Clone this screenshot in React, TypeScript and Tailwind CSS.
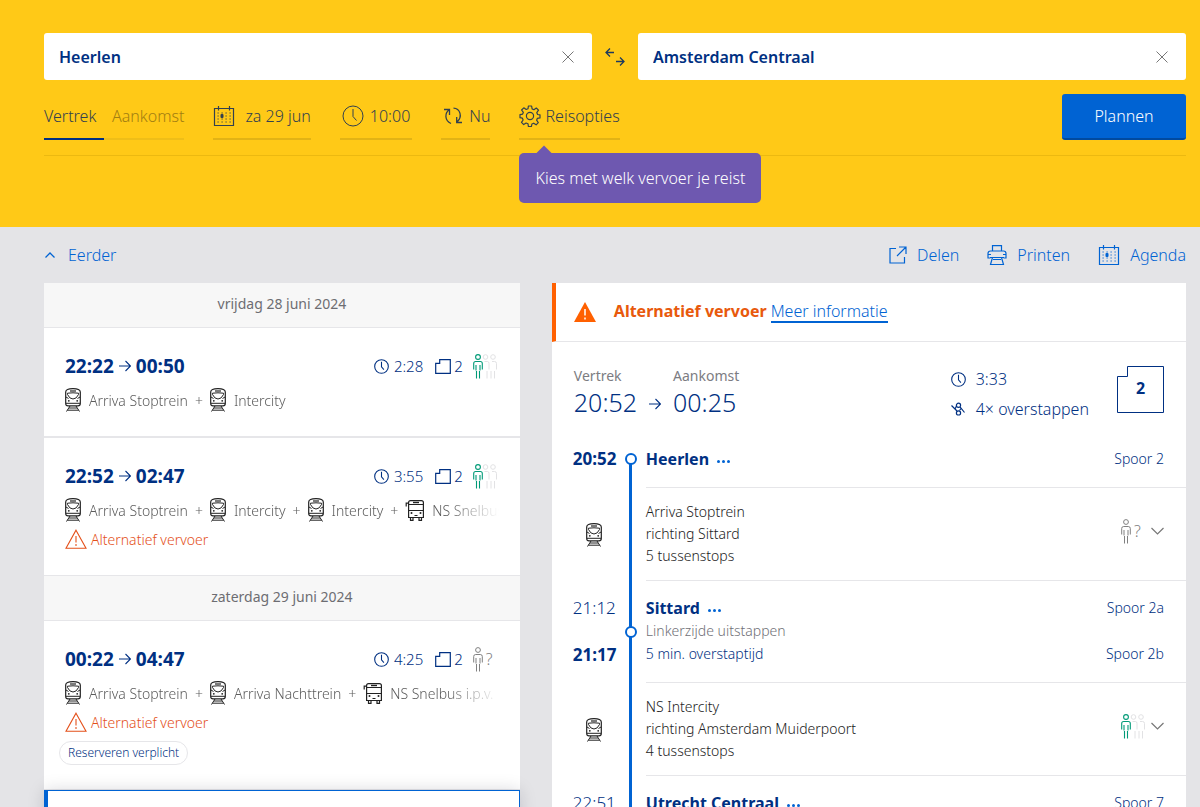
import { Fragment } from 'react';
import clsx from 'clsx';

type Crowd = 'low' | 'unknown';

interface TripLeg {
  kind: 'train' | 'bus';
  name: string;
}

interface Trip {
  departure: string;
  arrival: string;
  duration: string;
  crowd: Crowd;
  legs: TripLeg[];
  disrupted?: boolean;
  label?: string;
}

const fridayTrips: Trip[] = [
  {
    departure: '22:22',
    arrival: '00:50',
    duration: '2:28',
    crowd: 'low',
    legs: [
      { kind: 'train', name: 'Arriva Stoptrein' },
      { kind: 'train', name: 'Intercity' },
    ],
  },
  {
    departure: '22:52',
    arrival: '02:47',
    duration: '3:55',
    crowd: 'low',
    disrupted: true,
    legs: [
      { kind: 'train', name: 'Arriva Stoptrein' },
      { kind: 'train', name: 'Intercity' },
      { kind: 'train', name: 'Intercity' },
      { kind: 'bus', name: 'NS Snelbus' },
    ],
  },
];

const saturdayTrips: Trip[] = [
  {
    departure: '00:22',
    arrival: '04:47',
    duration: '4:25',
    crowd: 'unknown',
    disrupted: true,
    label: 'Reserveren verplicht',
    legs: [
      { kind: 'train', name: 'Arriva Stoptrein' },
      { kind: 'train', name: 'Arriva Nachttrein' },
      { kind: 'bus', name: 'NS Snelbus i.p.v.' },
    ],
  },
];

/* Icons */

function ClockIcon({ className }: { className?: string }) {
  return (
    <svg viewBox="0 0 22 22" fill="none" stroke="currentColor" className={className} aria-hidden="true">
      <circle cx="11" cy="11" r="10" />
      <path d="M11 4v7.5l3.5 4" />
    </svg>
  );
}

function CalendarIcon() {
  return (
    <svg width="22" height="22" viewBox="0 0 22 22" fill="none" stroke="currentColor" aria-hidden="true">
      <path d="M1.5 3.5h19v17h-19zM5.500 1v4.500M16.500 1v4.500" strokeWidth="1.200" />
      <path d="M4.500 8h14M4.500 11h14M4.500 14h14M4.500 17h14" strokeWidth="1.200" strokeDasharray="1.200 2.800" />
      <rect x="7.500" y="9" width="3" height="4" rx="1" fill="currentColor" stroke="none" />
    </svg>
  );
}

function RefreshIcon() {
  return (
    <svg width="20" height="20" viewBox="0 0 20 20" fill="none" stroke="currentColor" strokeWidth="1.300" aria-hidden="true">
      <path d="M1 3.500h5.500V9M6.300 3.800C1.500 7 1.500 14.500 8 17.500M10.500 2.200c6.500.3 9.500 8.300 3.500 13.800M19 16.500h-5.300V11" />
    </svg>
  );
}

function GearIcon() {
  return (
    <svg width="22" height="22" viewBox="0 0 22 22" fill="none" stroke="currentColor" strokeWidth="1.200" strokeLinejoin="round" aria-hidden="true">
      <circle cx="11" cy="11" r="3.600" />
      <path d="M9.400 1h3.200l.5 2.900 1.800.8 2.400-1.700 2.200 2.200-1.700 2.500.8 1.800 2.400.3v3.100l-2.600.4-.8 1.900 1.700 2.400-2.200 2.200-2.400-1.600-1.800.8-.5 2.500H9.400L9 18.800l-1.900-.8-2.400 1.600-2.200-2.200 1.600-2.400-.8-1.900L1 12.700V9.600l2.500-.4.8-1.800-1.700-2.400 2.200-2.200 2.400 1.700L9 3.800z" />
    </svg>
  );
}

function SwapIcon() {
  return (
    <svg width="20" height="18" viewBox="0 0 20 18" fill="none" stroke="currentColor" strokeWidth="1.300" aria-hidden="true">
      <path d="M9 4.500H1M5 .5l-4 4 4 4M11 13.500h8M15 9.500l4 4-4 4" />
    </svg>
  );
}

function CrossIcon() {
  return (
    <svg width="12" height="12" viewBox="0 0 12 12" fill="none" stroke="currentColor" aria-hidden="true">
      <path d="M.5.5l11 11M11.500.5l-11 11" />
    </svg>
  );
}

function ArrowIcon({ className }: { className?: string }) {
  return (
    <svg width="12" height="12" viewBox="0 0 12 12" fill="none" stroke="currentColor" strokeWidth="1.100" className={className} aria-hidden="true">
      <path d="M0 6h11.500M6.500 1l5 5-5 5" />
    </svg>
  );
}

function ShareIcon() {
  return (
    <svg width="18" height="18" viewBox="0 0 18 18" fill="none" stroke="currentColor" strokeWidth="1.200" aria-hidden="true">
      <path d="M7 2.500H1v14.500h14.500V11M10 1h7v7M17 1L8 10" />
    </svg>
  );
}

function PrintIcon() {
  return (
    <svg width="20" height="20" viewBox="0 0 20 20" fill="none" stroke="currentColor" strokeWidth="1.200" aria-hidden="true">
      <path d="M5.500 6V.6h9V6M3.500 13H1V8.500q0-2.500 2.500-2.500h13q2.500 0 2.500 2.500V13h-2.500M1 9.500h3M16 9.500h3M3 12.500h14M5.500 12.500l-2 7h13l-2-7M6 14.500h8" />
    </svg>
  );
}

function TrainIcon() {
  return (
    <svg width="16" height="24" viewBox="0 0 16 24" fill="none" stroke="#222" className="shrink-0" aria-hidden="true">
      <path d="M.7 15.500V4Q.7.700 8 .7t7.300 3.300v11.500q0 2.300-2.300 2.300H3Q.7 17.800.7 15.500z" strokeWidth="1.200" />
      <path d="M5 3h6" strokeWidth="1.200" />
      <path d="M2.500 5.200q5.500-.8 11 0v1.300Q11.500 11 8 11T2.500 6.500zM1 9l2.500 1.500M15 9l-2.500 1.500M1 15.300h14" />
      <circle cx="3.800" cy="12.800" r=".9" fill="#222" stroke="none" />
      <circle cx="12.200" cy="12.800" r=".9" fill="#222" stroke="none" />
      <path d="M5 18l-3.500 5.500M11 18l3.500 5.500M4 20h8M2.500 22.200h11" />
    </svg>
  );
}

function BusIcon() {
  return (
    <svg width="19" height="22" viewBox="0 0 19 22" fill="none" stroke="#222" strokeWidth="1.200" className="shrink-0" aria-hidden="true">
      <path d="M3.600 18.500v-15q0-1.900 2-1.900h10.800q2 0 2 1.900v15zM3.600 5.500h14.800M3.600 11.500h14.800M1.200 7.500V4.200h2.400" />
      <path d="M8 3.500h6" strokeWidth="1.400" />
      <path d="M5.500 18.500v2.800h2.500v-2.800M14 18.500v2.800h2.500v-2.800M9.500 16.500h3" />
      <circle cx="6.500" cy="14" r="1" fill="#222" stroke="none" />
      <circle cx="15.500" cy="14" r="1" fill="#222" stroke="none" />
    </svg>
  );
}

function ClassIcon() {
  return (
    <svg width="16" height="15" viewBox="0 0 16 15" fill="none" stroke="currentColor" strokeWidth="1.200" aria-hidden="true">
      <path d="M4.700.7h10.600v13.600H.7V4.300h4z" />
    </svg>
  );
}

function CrowdIcon({ level }: { level: Crowd }) {
  const person = 'M.7 15.500V9.500q0-2 2-2h4.600q2 0 2 2v6M3.500 17v7.500M6.500 17v7.500M3 11v5.500M7 11v5.500';
  if (level === 'unknown') {
    return (
      <span className="flex w-[26px] shrink-0 items-center text-[#808080]" role="img" aria-label="Drukte onbekend">
        <svg width="11" height="25" viewBox="0 0 11 25" fill="none" stroke="currentColor">
          <circle cx="5" cy="3" r="2.400" />
          <path d={person} />
        </svg>
        <span className="pl-0.5 text-[16px] font-light leading-none">?</span>
      </span>
    );
  }
  return (
    <svg width="26" height="25" viewBox="0 0 26 25" fill="none" className="shrink-0" role="img" aria-label="Lage drukte">
      <g stroke="#e2e2e4">
        <circle cx="12.500" cy="3" r="2.300" />
        <circle cx="20" cy="3" r="2.300" />
        <path d="M11.500 7.500h3q1.500 0 1.500 2v6M14 17v7.500M19 7.500h2.500q2 0 2 2v6M18 17v7.500M21.500 17v7.500" />
      </g>
      <g stroke="#009a77" strokeWidth="1.100">
        <circle cx="5" cy="3" r="2.400" />
        <path d={person} />
      </g>
    </svg>
  );
}

function WarningIcon({ solid }: { solid?: boolean }) {
  return solid ? (
    <svg width="22" height="20" viewBox="0 0 22 20" className="shrink-0" aria-hidden="true">
      <path d="M11 0l11 20H0z" fill="#ff6000" />
      <path d="M11 7v6.500M11 15.500v2" stroke="#fff" strokeWidth="1.500" />
    </svg>
  ) : (
    <svg width="22" height="20" viewBox="0 0 22 20" fill="none" stroke="currentColor" strokeWidth="1.100" className="shrink-0" aria-hidden="true">
      <path d="M11 1.200l10 18H1zM11 7v6.500M11 15v2" />
    </svg>
  );
}

function TransferIcon() {
  return (
    <svg width="15" height="14" viewBox="0 0 15 14" fill="none" stroke="currentColor" strokeWidth="1.200" aria-hidden="true">
      <circle cx="7.500" cy="3.300" r="2.100" />
      <circle cx="7.500" cy="10.900" r="2.100" />
      <path d="M.5 3.500l5.500 5.500M9 4.800l4.500 5.700M5.500 4l-1.500 3M8.500 8.500l1.500-2" />
    </svg>
  );
}

function Chevron({ up }: { up?: boolean }) {
  return up ? (
    <svg width="12" height="8" viewBox="0 0 12 8" fill="none" stroke="currentColor" strokeWidth="1.300" aria-hidden="true">
      <path d="M1.500 6.500L6 2l4.500 4.500" />
    </svg>
  ) : (
    <svg width="13" height="8" viewBox="0 0 13 8" fill="none" stroke="currentColor" strokeWidth="1.200" aria-hidden="true">
      <path d="M.5 1l6 6 6-6" />
    </svg>
  );
}

/* Planner form */

function StationField({ id, label, value }: { id: string; label: string; value: string }) {
  return (
    <div className="flex h-[47px] min-w-0 flex-1 items-center rounded-[3px] bg-white pr-[18px]">
      <input
        id={id}
        aria-label={label}
        defaultValue={value}
        className="h-full min-w-0 flex-1 bg-transparent pl-[15px] text-[16px] font-semibold text-[#003082] outline-none"
      />
      <button type="button" aria-label="Wissen" className="text-[#777]">
        <CrossIcon />
      </button>
    </div>
  );
}

function Planner() {
  const option = 'flex h-[46px] items-center border-b-2 border-[#e2b315]';
  return (
    <header className="h-[227px] bg-[#ffc917] pl-11 pr-3.5 pt-[33px] text-[#32404f]">
      <form onSubmit={(e) => e.preventDefault()}>
        <div className="flex items-center">
          <StationField id="from" label="Van" value="Heerlen" />
          <button type="button" aria-label="Wissel van en naar" className="flex w-[46px] justify-center text-[#1d3a5f]">
            <SwapIcon />
          </button>
          <StationField id="to" label="Naar" value="Amsterdam Centraal" />
        </div>

        <div className="mt-3.5 flex items-center border-b border-[#ecb910] pb-[15px] text-[16px] font-light">
          <div className="flex">
            <button type="button" aria-pressed="true" className="h-[46px] w-[60px] border-b-2 border-[#003082] text-left">
              Vertrek
            </button>
            <button type="button" aria-pressed="false" className="h-[46px] border-b-2 border-[#efbe18] pl-2 text-[#a27e12]">
              Aankomst
            </button>
          </div>
          <div className="ml-[29px] flex gap-[29px]">
            <button type="button" className={clsx(option, 'gap-2.5')}>
              <CalendarIcon />
              za 29 jun
            </button>
            <button type="button" className={clsx(option, 'gap-1.5 px-0.5')}>
              <ClockIcon className="size-[22px]" />
              10:00
            </button>
            <button type="button" className={clsx(option, 'gap-1.5 pl-0.5')}>
              <RefreshIcon />
              Nu
            </button>
            <div className="relative">
              <button type="button" aria-describedby="travel-tip" className={clsx(option, 'gap-1')}>
                <GearIcon />
                Reisopties
              </button>
              <div
                id="travel-tip"
                role="tooltip"
                className="absolute left-0 top-[59px] flex h-[50px] items-center whitespace-nowrap rounded-[5px] bg-[#6e58b0] px-4 text-white"
              >
                <span className="absolute -top-[5px] left-[19px] size-3 rotate-45 bg-[#6e58b0]" />
                Kies met welk vervoer je reist
              </div>
            </div>
          </div>
          <button type="submit" className="ml-auto h-[46px] w-[124px] rounded-[3px] border-b-2 border-[#004aa0] bg-[#0063d3] text-white">
            Plannen
          </button>
        </div>
      </form>
    </header>
  );
}

/* Trip list */

function DateHeading({ children }: { children: string }) {
  return (
    <h2 className="flex h-[45px] items-center justify-center border-b border-[#e6e6e9] bg-[#f7f7f7] pb-1 text-[14px] text-[#6d6d72]">
      {children}
    </h2>
  );
}

function TripItem({ trip }: { trip: Trip }) {
  return (
    <li className="border-b-2 border-[#e6e6e9] px-[21px] pb-6 pt-[26px] last:border-b">
      <div className="flex h-6 items-center text-[#003082]">
        <div className="flex items-center gap-[5px] text-[19px] font-bold leading-6">
          {trip.departure}
          <ArrowIcon />
          {trip.arrival}
        </div>
        <div className="ml-auto flex items-center text-[15px] leading-6">
          <ClockIcon className="mr-[5px] size-[15px] [stroke-width:1.6]" />
          <span className="mr-3 font-light">{trip.duration}</span>
          <ClassIcon />
          <span className="ml-[3px] mr-2.5 font-light">2</span>
          <CrowdIcon level={trip.crowd} />
        </div>
      </div>
      <div className="mt-2.5 flex h-6 items-center overflow-hidden whitespace-nowrap text-[14px] font-light text-[#5c5c5c] [mask-image:linear-gradient(to_right,black_88%,transparent)]">
        {trip.legs.map((leg, i) => (
          <Fragment key={i}>
            {i > 0 && <span className="mx-[7px]">+</span>}
            {leg.kind === 'train' ? <TrainIcon /> : <BusIcon />}
            <span className="ml-2">{leg.name}</span>
          </Fragment>
        ))}
      </div>
      {trip.disrupted && (
        <div className="mt-[5px] flex h-6 items-center gap-1 text-[14px] font-light text-[#e4501a]">
          <WarningIcon />
          Alternatief vervoer
        </div>
      )}
      {trip.label && (
        <div className="-ml-1.5 mt-[7px] flex h-6 w-fit items-center rounded-full border border-[#e6e6e9] px-2 text-[12px] font-light text-[#003082]">
          {trip.label}
        </div>
      )}
    </li>
  );
}

function TripList() {
  return (
    <section className="w-5/12">
      <div className="bg-white">
        <DateHeading>vrijdag 28 juni 2024</DateHeading>
        <ul>
          {fridayTrips.map((trip) => (
            <TripItem key={trip.departure} trip={trip} />
          ))}
        </ul>
        <DateHeading>zaterdag 29 juni 2024</DateHeading>
        <ul>
          {saturdayTrips.map((trip) => (
            <TripItem key={trip.departure} trip={trip} />
          ))}
        </ul>
      </div>
      {/* Selected trip */}
      <div className="relative h-[110px] border border-l-4 border-[#0063d3] bg-white shadow-[0_0_16px_rgba(7,7,33,0.15)]" />
    </section>
  );
}

/* Trip details */

interface RowProps {
  left: React.ReactNode;
  children: React.ReactNode;
  line?: 'full' | 'start';
  dot?: string;
}

function TimelineRow({ left, children, line = 'full', dot }: RowProps) {
  return (
    <li className="flex pl-[21px]">
      <div className="w-[43px] shrink-0">{left}</div>
      <div className="relative flex w-[30px] shrink-0 justify-center">
        <span className={clsx('w-[3px] bg-[#0063d3]', line === 'start' && 'mt-3')} />
        {dot && <span className={clsx('absolute size-3 rounded-full border-2 border-[#0063d3] bg-white', dot)} />}
      </div>
      <div className="flex-1 border-b border-[#e6e6e9] pr-[22px]">{children}</div>
    </li>
  );
}

function StationName({ name }: { name: string }) {
  return (
    <div className="flex items-center gap-2 text-[16px] font-bold leading-6 text-[#003082]">
      {name}
      <button type="button" aria-label={`Meer over ${name}`} className="flex gap-0.5 pt-1">
        <span className="size-[3px] rounded-full bg-[#0063d3]" />
        <span className="size-[3px] rounded-full bg-[#0063d3]" />
        <span className="size-[3px] rounded-full bg-[#0063d3]" />
      </button>
    </div>
  );
}

function LegRow({ lines, crowd }: { lines: string[]; crowd: Crowd }) {
  return (
    <TimelineRow left={<div className="flex h-full items-center justify-center"><TrainIcon /></div>}>
      <div className="flex items-center justify-between py-[13px] text-[14px] font-light leading-[22px] text-[#222]">
        <div>
          {lines.map((text) => (
            <p key={text}>{text}</p>
          ))}
        </div>
        <button type="button" aria-label="Toon tussenstops" className="flex items-center gap-1 pb-1.5 text-[#777]">
          <CrowdIcon level={crowd} />
          <Chevron />
        </button>
      </div>
    </TimelineRow>
  );
}

function TripDetails() {
  const track = 'text-[14px] font-light leading-6 text-[#003082]';
  return (
    <section className="w-7/12 pl-8">
      <div className="bg-white">
        <div className="flex h-[59px] items-center border-b border-l-4 border-b-[#e6e6e9] border-l-[#ff6000] pl-[18px] text-[16px]">
          <WarningIcon solid />
          <p className="ml-[18px] pb-0.5 font-bold text-[#e8590c]">Alternatief vervoer</p>
          <a href="#info" className="ml-1 border-b-2 border-[#0063d3] font-light leading-5 text-[#0063d3]">
            Meer informatie
          </a>
        </div>

        <div className="flex px-[22px] pb-[23px] pt-[22px] text-[#003082]">
          <dl className="flex">
            <div>
              <dt className="text-[14px] leading-6 text-[#7c7c82]">Vertrek</dt>
              <dd className="flex items-center text-[25px] font-light leading-7">
                20:52
                <ArrowIcon className="mx-3 mt-1" />
              </dd>
            </div>
            <div>
              <dt className="text-[14px] leading-6 text-[#7c7c82]">Aankomst</dt>
              <dd className="text-[25px] font-light leading-7">00:25</dd>
            </div>
          </dl>
          <div className="ml-auto text-[16px] font-light leading-[30px]">
            <div className="flex items-center gap-2.5">
              <ClockIcon className="size-[15px] [stroke-width:1.6]" />
              3:33
            </div>
            <div className="flex items-center gap-2.5">
              <TransferIcon />
              4× overstappen
            </div>
          </div>
          <div className="relative ml-7 mt-0.5 flex size-[47px] items-center justify-center pb-1 text-[16px] font-bold">
            <svg viewBox="0 0 47 47" fill="none" stroke="#003082" className="absolute inset-0" aria-hidden="true">
              <path d="M10.500.5h36v46H.5v-36h10z" />
            </svg>
            2
          </div>
        </div>

        <ol>
          <TimelineRow
            left={<time className="block text-[17px] font-bold leading-6 text-[#003082]">20:52</time>}
            line="start"
            dot="top-1.5"
          >
            <div className="flex justify-between pb-4">
              <StationName name="Heerlen" />
              <span className={track}>Spoor 2</span>
            </div>
          </TimelineRow>
          <LegRow lines={['Arriva Stoptrein', 'richting Sittard', '5 tussenstops']} crowd="unknown" />
          <TimelineRow
            left={
              <div className="flex h-full flex-col justify-between pb-4 pt-[15px] text-[17px] leading-6 text-[#003082]">
                <time className="font-light">21:12</time>
                <time className="font-bold">21:17</time>
              </div>
            }
            dot="top-[45px]"
          >
            <div className="flex justify-between pb-4 pt-[15px]">
              <div className="text-[14px] font-light">
                <StationName name="Sittard" />
                <p className="leading-[22px] text-[#707077]">Linkerzijde uitstappen</p>
                <p className="leading-6 text-[#003082]">5 min. overstaptijd</p>
              </div>
              <div className={clsx(track, 'flex flex-col justify-between text-right')}>
                <span>Spoor 2a</span>
                <span>Spoor 2b</span>
              </div>
            </div>
          </TimelineRow>
          <LegRow lines={['NS Intercity', 'richting Amsterdam Muiderpoort', '4 tussenstops']} crowd="low" />
          <TimelineRow
            left={<time className="block pt-[15px] text-[17px] font-light leading-6 text-[#003082]">22:51</time>}
            dot="top-[45px]"
          >
            <div className="flex justify-between pb-10 pt-[15px]">
              <StationName name="Utrecht Centraal" />
              <span className={track}>Spoor 7</span>
            </div>
          </TimelineRow>
        </ol>
      </div>
    </section>
  );
}

export default function App() {
  return (
    <div className="h-screen overflow-hidden bg-[#e4e4e7] font-['Noto_Sans','Open_Sans',sans-serif]">
      <Planner />
      <main className="pl-11 pr-3.5">
        <div className="flex h-14 items-center justify-between text-[16px] font-light text-[#0063d3]">
          <button type="button" className="flex items-center gap-3">
            <Chevron up />
            Eerder
          </button>
          <div className="flex gap-7">
            <button type="button" className="flex items-center gap-2.5">
              <ShareIcon />
              Delen
            </button>
            <button type="button" className="flex items-center gap-2.5">
              <PrintIcon />
              Printen
            </button>
            <button type="button" className="flex items-center gap-2.5">
              <CalendarIcon />
              Agenda
            </button>
          </div>
        </div>
        <div className="flex items-start">
          <TripList />
          <TripDetails />
        </div>
      </main>
    </div>
  );
}
